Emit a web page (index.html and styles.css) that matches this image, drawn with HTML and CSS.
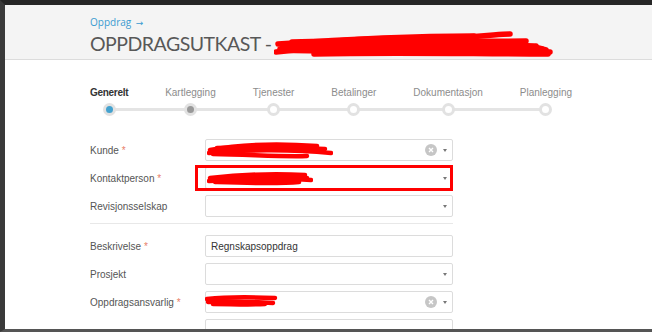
FILE: index.html
```html
<!DOCTYPE html>
<html lang="no">
<head>
  <meta charset="UTF-8">
  <title>Oppdragsutkast</title>
  <link rel="stylesheet" href="styles.css">
</head>
<body>
  <div class="screen">
    <header class="page-head">
      <a class="crumb" href="#">Oppdrag <span class="arrow">→</span></a>
      <h1 class="title">OPPDRAGSUTKAST -
        <svg class="scribble scribble-title" width="280" height="28" viewBox="0 0 280 28">
          <path d="M6 19 C40 11 90 8 150 8 S220 4 236 4" />
          <path d="M2 22 C60 16 140 14 200 14 S258 16 272 20" />
          <path d="M8 20 C80 23 160 18 276 22" />
          <path d="M18 12 C100 10 180 12 252 11" />
          <path d="M12 16 C90 14 170 17 262 16" />
          <path d="M40 24 C120 22 200 24 274 24" />
          <path d="M30 18 C110 17 190 20 268 19" />
          <path d="M4 14 C60 10 120 6 200 6" />
        </svg>
      </h1>
    </header>

    <main class="content">
      <ol class="steps">
        <li class="step active"><span class="step-label">Generelt</span><span class="step-dot"></span></li>
        <li class="step visited"><span class="step-label">Kartlegging</span><span class="step-dot"></span></li>
        <li class="step"><span class="step-label">Tjenester</span><span class="step-dot"></span></li>
        <li class="step"><span class="step-label">Betalinger</span><span class="step-dot"></span></li>
        <li class="step"><span class="step-label">Dokumentasjon</span><span class="step-dot"></span></li>
        <li class="step"><span class="step-label">Planlegging</span><span class="step-dot"></span></li>
      </ol>

      <form class="form">
        <div class="row">
          <label class="row-label">Kunde <span class="req">*</span></label>
          <div class="field">
            <svg class="scribble scribble-kunde" width="126" height="18" viewBox="0 0 126 18">
              <path d="M3 9 C30 4 70 2 110 5" />
              <path d="M2 12 C40 8 90 9 124 12" />
              <path d="M6 13 C50 14 80 16 100 15" />
              <path d="M10 7 C40 6 80 6 118 8" />
            </svg>
            <span class="clear"><svg width="12" height="12" viewBox="0 0 12 12"><path d="M4 4 L8 8 M8 4 L4 8" /></svg></span>
            <span class="caret"></span>
          </div>
        </div>

        <div class="row flagged">
          <label class="row-label">Kontaktperson <span class="req">*</span></label>
          <div class="field">
            <svg class="scribble scribble-kontakt" width="106" height="18" viewBox="0 0 106 18">
              <path d="M3 8 C30 5 60 3 98 5" />
              <path d="M2 11 C40 9 70 8 104 10" />
              <path d="M8 12 C40 13 70 14 92 12" />
              <path d="M12 9 C40 8 70 8 100 8" />
            </svg>
            <span class="caret push"></span>
          </div>
        </div>

        <div class="row">
          <label class="row-label">Revisjonsselskap</label>
          <div class="field">
            <span class="caret push"></span>
          </div>
        </div>

        <hr class="sep">

        <div class="row">
          <label class="row-label">Beskrivelse <span class="req">*</span></label>
          <div class="field">
            <span class="value">Regnskapsoppdrag</span>
          </div>
        </div>

        <div class="row">
          <label class="row-label">Prosjekt</label>
          <div class="field">
            <span class="caret push"></span>
          </div>
        </div>

        <div class="row">
          <label class="row-label">Oppdragsansvarlig <span class="req">*</span></label>
          <div class="field">
            <svg class="scribble scribble-ansvarlig" width="74" height="14" viewBox="0 0 74 14">
              <path d="M2 5 C20 3 45 3 70 4" />
              <path d="M3 8 C25 7 50 8 68 9" />
              <path d="M8 10 C25 10 45 11 60 10" />
            </svg>
            <span class="clear"><svg width="12" height="12" viewBox="0 0 12 12"><path d="M4 4 L8 8 M8 4 L4 8" /></svg></span>
            <span class="caret"></span>
          </div>
        </div>

        <div class="row">
          <span class="row-label"></span>
          <div class="field"></div>
        </div>
      </form>
    </main>
  </div>
</body>
</html>
```

FILE: styles.css
```css
body {
  margin: 0;
  font-family: 'Liberation Sans', Arial, sans-serif;
  background: #fff;
}

.screen {
  width: 652px;
  height: 332px;
  box-sizing: border-box;
  border-top: 5px solid #262626;
  border-left: 5px solid #3a3a3a;
  border-bottom: 3px solid #555;
  overflow: hidden;
  background: #fff;
}

.page-head {
  background: #f4f4f4;
  border-bottom: 1px solid #dcdcdc;
  padding: 11px 0 6px 85px;
  height: 37px;
}

.crumb {
  display: block;
  font-family: 'Open Sans', sans-serif;
  font-size: 10px;
  line-height: 13px;
  color: #3a9bd0;
  text-decoration: none;
}

.arrow {
  font-family: 'DejaVu Sans', sans-serif;
  font-size: 9px;
  margin-left: 2px;
}

.title {
  margin: 0;
  font-family: Lato, 'Open Sans', sans-serif;
  font-weight: 400;
  font-size: 19.5px;
  letter-spacing: -0.5px;
  line-height: 24px;
  color: #585858;
  white-space: nowrap;
}

.scribble path {
  fill: none;
  stroke: #f00;
  stroke-width: 4.5;
  stroke-linecap: round;
}

.scribble-title {
  vertical-align: -7px;
  margin-left: -2px;
}

.scribble-title path {
  stroke-width: 5.5;
}

.content {
  padding-top: 27px;
}

.steps {
  list-style: none;
  margin: 0 0 0 85px;
  padding: 0;
  width: 482px;
  display: flex;
  justify-content: space-between;
  position: relative;
}

.steps::before {
  content: "";
  position: absolute;
  left: 18px;
  right: 25px;
  top: 21px;
  height: 3px;
  background: #e4e4e4;
}

.step {
  display: flex;
  flex-direction: column;
  align-items: center;
  gap: 4px;
}

.step-label {
  font-size: 10px;
  line-height: 12px;
  color: #8c8c8c;
}

.step.active .step-label {
  color: #333;
  font-weight: bold;
  letter-spacing: -0.3px;
}

.step-dot {
  width: 13px;
  height: 13px;
  box-sizing: border-box;
  border-radius: 50%;
  border: 3px solid #e2e2e2;
  background: #fff;
  position: relative;
  z-index: 1;
}

.step.active .step-dot {
  background: #44a2cf;
}

.step.visited .step-dot {
  background: #999;
}

.form {
  margin: 23px 0 0 85px;
  width: 363px;
}

.row {
  display: flex;
  align-items: center;
  height: 22px;
  margin-bottom: 6px;
}

.row-label {
  width: 115px;
  font-size: 10px;
  color: #555;
}

.req {
  color: #e8806a;
}

.field {
  flex: 1;
  height: 22px;
  box-sizing: border-box;
  border: 1px solid #dcdcdc;
  border-radius: 2px;
  display: flex;
  align-items: center;
  padding: 0 5px 0 5px;
  position: relative;
}

.value {
  font-size: 10px;
  color: #333;
}

.clear {
  margin-left: auto;
  margin-right: 6px;
  width: 12px;
  height: 12px;
  border-radius: 50%;
  background: #c6c6c6;
  display: flex;
}

.clear path {
  stroke: #fff;
  stroke-width: 1.4;
}

.caret {
  width: 0;
  height: 0;
  border-left: 2.5px solid transparent;
  border-right: 2.5px solid transparent;
  border-top: 3px solid #777;
}

.caret.push {
  margin-left: auto;
}

.scribble-kunde {
  position: absolute;
  left: 1px;
  top: 1px;
}

.scribble-kontakt {
  position: absolute;
  left: 1px;
  top: 2px;
}

.scribble-ansvarlig {
  position: absolute;
  left: -1px;
  top: 2px;
}

.flagged .field::after {
  content: "";
  position: absolute;
  left: -11px;
  right: -1px;
  top: -3px;
  bottom: -3px;
  border: 3px solid #f00;
}

.sep {
  border: 0;
  border-top: 1px solid #e8e8e8;
  margin: 5px 0 11px;
}
```
